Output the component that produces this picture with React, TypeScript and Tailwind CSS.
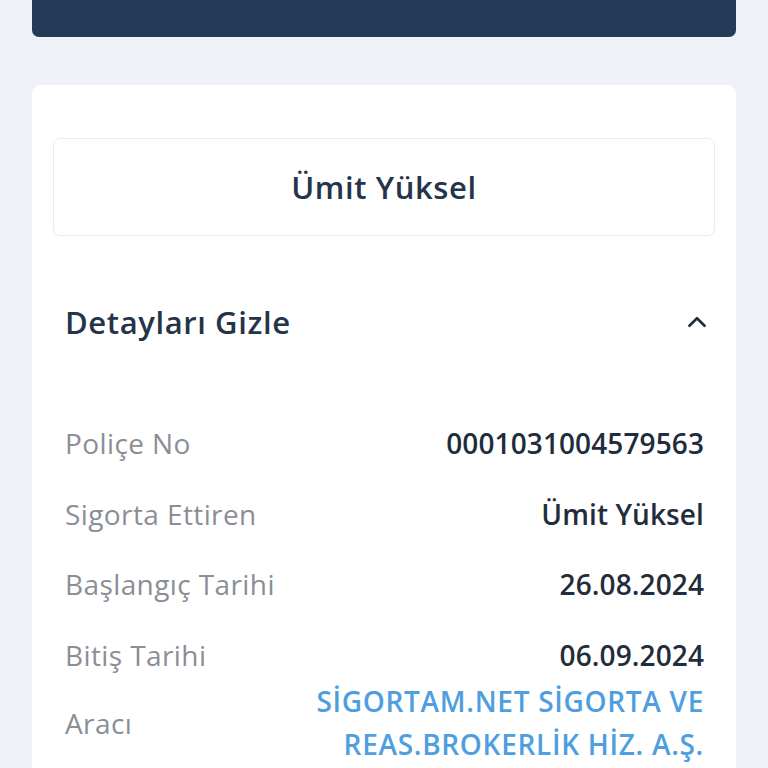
import React from "react";

function ChevronUp() {
  return (
    <svg width="26" height="26" viewBox="0 0 24 24" fill="none" stroke="#1f2d3d" strokeWidth="2.4" strokeLinecap="round" strokeLinejoin="round">
      <path d="M5 15.5 L12 8.5 L19 15.5" />
    </svg>
  );
}

const rows: { label: string; value: string }[] = [
  { label: "Poliçe No", value: "0001031004579563" },
  { label: "Sigorta Ettiren", value: "Ümit Yüksel" },
  { label: "Başlangıç Tarihi", value: "26.08.2024" },
  { label: "Bitiş Tarihi", value: "06.09.2024" },
];

export default function App() {
  return (
    <div className="w-[768px] h-[768px] overflow-hidden bg-[#eef1f6] px-[32px] font-['Open_Sans','Noto_Sans',sans-serif]">
      <div className="h-[37px] bg-[#253a56] rounded-b-[7px]" />
      <div className="mt-[48px] bg-white rounded-t-[8px] px-[21px] pt-[53px] h-[700px]">
        <div className="h-[98px] border border-[#e9ecf0] rounded-[7px] flex items-center justify-center">
          <span className="text-[31px] font-semibold text-[#253448] tracking-[0.6px]">Ümit Yüksel</span>
        </div>
        <div className="mt-[63px] flex items-center justify-between pl-[12px] pr-[5px] h-[46px]">
          <span className="text-[31px] font-semibold text-[#253448] tracking-[0.6px]">Detayları Gizle</span>
          <ChevronUp />
        </div>
        <div className="mt-[63px] pl-[12px] pr-[11px] flex flex-col">
          {rows.map((r) => (
            <div key={r.label} className="h-[70.5px] flex items-center justify-between">
              <span className="text-[28px] text-[#8a8e95] tracking-[0.4px]">{r.label}</span>
              <span className="text-[28px] font-semibold text-[#1f2d3d] tracking-[0.1px]">{r.value}</span>
            </div>
          ))}
          <div className="flex items-center justify-between -mt-[10px]">
            <span className="text-[28px] text-[#8a8e95] tracking-[0.4px]">Aracı</span>
            <span className="text-[28px] font-semibold text-[#4e9ee0] text-right leading-[43px] w-[440px] tracking-[0.7px]">
              SİGORTAM.NET SİGORTA VE REAS.BROKERLİK HİZ. A.Ş.
            </span>
          </div>
        </div>
      </div>
    </div>
  );
}
